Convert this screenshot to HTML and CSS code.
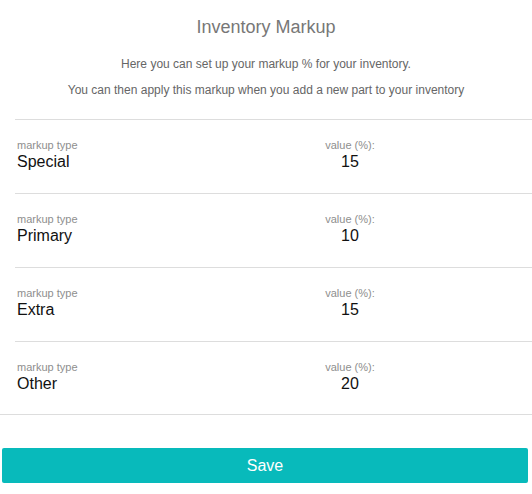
FILE: index.html
```html
<!DOCTYPE html>
<html>
<head>
<meta charset="utf-8">
<link rel="stylesheet" href="styles.css">
</head>
<body>
<div class="page">
  <header class="header">
    <h1 class="title">Inventory Markup</h1>
    <p class="desc first">Here you can set up your markup % for your inventory.</p>
    <p class="desc second">You can then apply this markup when you add a new part to your inventory</p>
  </header>
  <div class="list">
    <div class="row">
      <div class="col type"><div class="label">markup type</div><div class="val">Special</div></div>
      <div class="col value"><div class="label">value (%):</div><div class="val">15</div></div>
    </div>
    <div class="row">
      <div class="col type"><div class="label">markup type</div><div class="val">Primary</div></div>
      <div class="col value"><div class="label">value (%):</div><div class="val">10</div></div>
    </div>
    <div class="row">
      <div class="col type"><div class="label">markup type</div><div class="val">Extra</div></div>
      <div class="col value"><div class="label">value (%):</div><div class="val">15</div></div>
    </div>
    <div class="row">
      <div class="col type"><div class="label">markup type</div><div class="val">Other</div></div>
      <div class="col value"><div class="label">value (%):</div><div class="val">20</div></div>
    </div>
  </div>
  <div class="end-line"></div>
  <button class="save">Save</button>
</div>
</body>
</html>
```
FILE: styles.css
```css
html, body {
  margin: 0;
  padding: 0;
  background: #fff;
}
body {
  font-family: "Liberation Sans", Arial, sans-serif;
}
.page {
  width: 532px;
}
.header {
  padding-top: 17px;
  text-align: center;
}
.title {
  margin: 0;
  font-size: 18px;
  line-height: 20px;
  font-weight: normal;
  color: #777;
}
.desc {
  margin: 0;
  font-size: 12px;
  line-height: 14px;
  color: #666;
}
.desc.first {
  margin-top: 20px;
}
.desc.second {
  margin-top: 12px;
  margin-bottom: 22px;
}
.list {
  margin-left: 15px;
}
.row {
  display: flex;
  border-top: 1px solid #ddd;
  padding: 19px 0 22px 2px;
}
.row:last-child {
  padding-bottom: 21px;
}
.col.type {
  width: 308px;
}
.col.value {
  width: 50px;
  text-align: center;
}
.label {
  font-size: 11px;
  line-height: 12px;
  color: #8e8e8e;
}
.val {
  margin-top: 2px;
  font-size: 16px;
  line-height: 18px;
  color: #111;
}
.end-line {
  border-top: 1px solid #ddd;
}
.save {
  display: block;
  margin: 33px 4px 0 2px;
  width: 526px;
  height: 35px;
  border: none;
  border-radius: 2px;
  background: #08babb;
  color: #fff;
  font-family: "Liberation Sans", Arial, sans-serif;
  font-size: 16px;
  padding: 0;
}
```
